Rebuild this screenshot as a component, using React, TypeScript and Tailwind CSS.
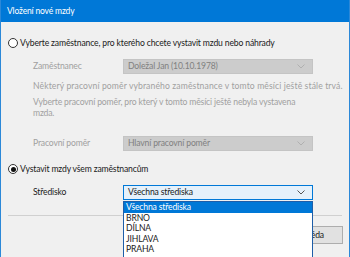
import React from 'react';

const font = { fontFamily: 'Lato, "Noto Sans", sans-serif' };

const Chevron: React.FC<{ color?: string }> = ({ color = '#a8a8a8' }) => (
    <svg width="8" height="5" viewBox="0 0 8 5" fill="none">
        <path d="M0.5 0.5 L4 4 L7.5 0.5" stroke={color} strokeWidth="1" />
    </svg>
);

const Radio: React.FC<{ checked?: boolean }> = ({ checked }) => (
    <div className="w-[10px] h-[10px] rounded-full border border-[#333] bg-white flex items-center justify-center shrink-0">
        {checked && <div className="w-[5px] h-[5px] rounded-full bg-[#111]" />}
    </div>
);

const DisabledCombo: React.FC<{ value: string }> = ({ value }) => (
    <div className="w-[190px] h-[15px] bg-[#cccccc] border border-[#c4c4c4] flex items-center justify-between pl-[4px] pr-[7px]">
        <span className="text-[#808080]">{value}</span>
        <Chevron color="#b0b0b0" />
    </div>
);

export default function App() {
    const options = ['Všechna střediska', 'BRNO', 'DÍLNA', 'JIHLAVA', 'PRAHA'];

    return (
        <div className="w-[350px] h-[257px] overflow-hidden bg-[#f0f0f0] border-x border-[#2b88d8] text-[8.6px] tracking-[-0.15px] leading-[11px] text-[#1a1a1a] whitespace-nowrap" style={font}>
            {/* Title bar */}
            <div className="h-[22px] bg-[#0078d7] text-white flex items-center px-[6px] text-[8.5px]">
                Vložení nové mzdy
            </div>

            {/* Option 1 */}
            <div className="mt-[14px] h-[14px] flex items-center gap-[2px] pl-[7px]">
                <Radio />
                <span>Vyberte zaměstnance, pro kterého chcete vystavit mzdu nebo náhrady</span>
            </div>

            <div className="pl-[32px] text-[#a0a0a0]">
                <div className="mt-[9px] h-[15px] flex items-center">
                    <span className="w-[90px]">Zaměstnanec</span>
                    <DisabledCombo value="Doležal Jan (10.10.1978)" />
                </div>
                <div className="mt-[6px] h-[12px] flex items-center tracking-[0.12px]">
                    Některý pracovní poměr vybraného zaměstnance v tomto měsíci ještě stále trvá.
                </div>
                <div className="mt-[5px] h-[22px] w-[270px] whitespace-normal">
                    Vyberte pracovní poměr, pro který v tomto měsíci ještě nebyla vystavena mzda.
                </div>
                <div className="mt-[17px] h-[15px] flex items-center">
                    <span className="w-[90px]">Pracovní poměr</span>
                    <DisabledCombo value="Hlavní pracovní poměr" />
                </div>
            </div>

            {/* Option 2 */}
            <div className="mt-[11px] h-[14px] flex items-center gap-[2px] pl-[7px]">
                <Radio checked />
                <span>Vystavit mzdy všem zaměstnancům</span>
            </div>

            <div className="pl-[32px] mt-[9px] h-[15px] flex items-center">
                <span className="w-[90px]">Středisko</span>
                <div className="relative">
                    <div className="w-[190px] h-[15px] bg-[#e5f1fb] border border-[#0078d7] flex items-center justify-between pl-[4px] pr-[7px]">
                        <span>Všechna střediska</span>
                        <Chevron color="#555" />
                    </div>

                    {/* Open dropdown list */}
                    <div className="absolute z-10 left-0 top-[16px] w-[190px] bg-white border border-[#1e5ea8] pb-[2px]">
                        {options.map((o, i) => (
                            <div
                                key={o}
                                className={`h-[10.6px] leading-[10.6px] pl-[2px] ${i === 0 ? 'bg-[#0078d7] text-white' : 'text-[#1a1a1a]'}`}
                            >
                                {o}
                            </div>
                        ))}
                    </div>
                </div>
            </div>

            <div className="mt-[15px] mx-[7px] h-px bg-[#d0d0d0]" />

            <div className="mt-[10px] flex justify-end pr-[6px]">
                <button className="w-[75px] h-[18px] bg-[#e1e1e1] border border-[#adadad] text-[8.6px] tracking-[-0.15px] text-[#1a1a1a]">
                    Nápověda
                </button>
            </div>
        </div>
    );
}
